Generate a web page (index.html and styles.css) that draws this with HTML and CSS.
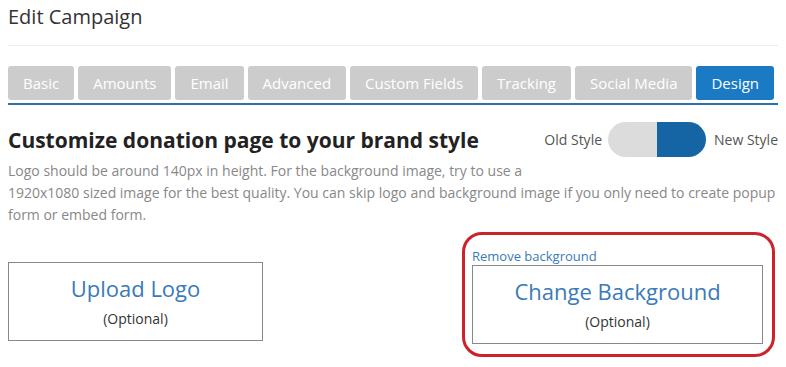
FILE: index.html
```html
<!DOCTYPE html>
<html lang="en">
<head>
    <meta charset="UTF-8">
    <title>Edit Campaign</title>
    <link rel="stylesheet" href="styles.css">
</head>
<body>
    <div class="container">
        <h1>Edit Campaign</h1>

        <ul class="tabs">
            <li>Basic</li>
            <li>Amounts</li>
            <li>Email</li>
            <li>Advanced</li>
            <li>Custom Fields</li>
            <li>Tracking</li>
            <li>Social Media</li>
            <li class="active">Design</li>
        </ul>

        <div class="design-head">
            <h2>Customize donation page to your brand style</h2>
            <div class="style-switch">
                <span>Old Style</span>
                <div class="switch"><span class="off"></span><span class="on"></span></div>
                <span>New Style</span>
            </div>
        </div>
        <p class="hint">Logo should be around 140px in height. For the background image, try to use a<br>1920x1080 sized image for the best quality. You can skip logo and background image if you only need to create popup form or embed form.</p>

        <div class="uploads">
            <div class="upload-col">
                <div class="upload-box logo-box">
                    <span class="upload-title">Upload Logo</span>
                    <span class="upload-note">(Optional)</span>
                </div>
            </div>
            <div class="upload-col bg-col">
                <a class="remove-link" href="#">Remove background</a>
                <div class="upload-box bg-box">
                    <span class="upload-title">Change Background</span>
                    <span class="upload-note">(Optional)</span>
                </div>
            </div>
        </div>
    </div>
</body>
</html>
```

FILE: styles.css
```css
body {
    font-family: 'Open Sans', 'Liberation Sans', sans-serif;
    margin: 0;
    padding: 0;
    background: #ffffff;
    color: #333;
}

.container {
    width: 770px;
    padding: 0 8px;
}

h1 {
    font-size: 20px;
    font-weight: normal;
    color: #333;
    margin: 0;
    padding: 3px 0 14px;
    line-height: 28px;
    border-bottom: 1px solid #eeeeee;
}

.tabs {
    list-style: none;
    margin: 20px 0 0;
    padding: 0 0 3px;
    display: flex;
    gap: 4px;
    border-bottom: 2px solid #2d72ad;
}

.tabs li {
    flex-shrink: 0;
    white-space: nowrap;
    background-color: #cccccc;
    color: #ffffff;
    font-size: 15px;
    line-height: 34px;
    height: 34px;
    padding: 0 15px;
    border-radius: 3px;
}

.tabs li.active {
    background-color: #1a7ac4;
}

.design-head {
    display: flex;
    justify-content: space-between;
    align-items: center;
    margin-top: 17px;
}

h2 {
    font-size: 21px;
    font-weight: bold;
    color: #222;
    margin: 0;
}

.style-switch {
    display: flex;
    align-items: center;
    gap: 6px;
    font-size: 14px;
    color: #555;
}

.switch {
    display: flex;
    width: 98px;
    height: 35px;
    border-radius: 18px;
    overflow: hidden;
    margin-right: 2px;
}

.switch span {
    flex: 1;
}

.switch .off {
    background-color: #dcdcdc;
}

.switch .on {
    background-color: #1565a5;
}

.hint {
    font-size: 14px;
    line-height: 22px;
    color: #888;
    margin: 3px 0 0;
}

.uploads {
    display: flex;
    justify-content: space-between;
    align-items: flex-start;
    margin-top: 10px;
}

.upload-col {
    padding-top: 26px;
}

.upload-box {
    border: 1px solid #888;
    display: flex;
    flex-direction: column;
    align-items: center;
    box-sizing: border-box;
}

.logo-box {
    width: 255px;
    height: 79px;
    padding-top: 10px;
}

.upload-title {
    font-size: 22px;
    color: #3a7ab8;
    line-height: 30px;
}

.upload-note {
    font-size: 14px;
    color: #333;
    margin-top: 6px;
}

.bg-col {
    padding: 12px 9px 10px 7px;
    border: 3px solid #cc2229;
    border-radius: 20px;
    margin-right: 3px;
    margin-top: -4px;
}

.remove-link {
    display: block;
    font-size: 13px;
    color: #3a7ab8;
    text-decoration: none;
    line-height: 18px;
}

.bg-box {
    width: 291px;
    height: 79px;
    padding-top: 10px;
}
```
